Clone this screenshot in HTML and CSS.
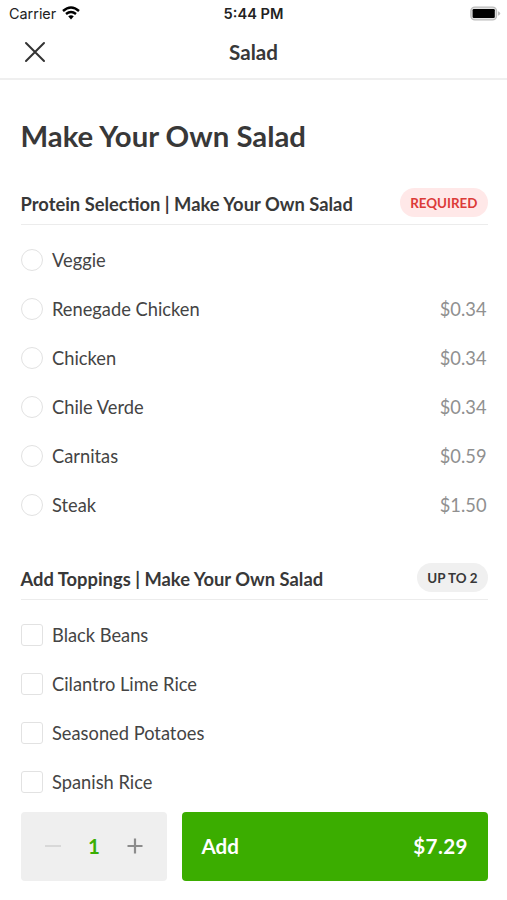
FILE: index.html
```html
<!DOCTYPE html>
<html lang="en">
<head>
<meta charset="utf-8">
<title>Salad</title>
<link rel="stylesheet" href="styles.css">
</head>
<body>
<div class="status">
  <div class="carrier"><span>Carrier</span>
    <svg width="18" height="14" viewBox="0 0 18 14"><path d="M1 5Q9-2 17 5M4 8Q9 3.8 14 8" fill="none" stroke="#000" stroke-width="2.4"/><path d="M6.2 10.3Q9 8.1 11.8 10.3L9 13.4Z"/></svg>
  </div>
  <div class="clock">5:44 PM</div>
  <svg class="battery" width="31" height="15" viewBox="0 0 31 15"><rect x=".9" y="1.1" width="25.6" height="12.8" rx="4" fill="#e4e4e4" stroke="#bcbcbc" stroke-width="1.4"/><rect x="2.6" y="3" width="22.2" height="9" rx="1.2"/><path d="M28 5.2q2.2.7 2.2 2.3T28 9.8z" fill="#bcbcbc"/></svg>
</div>
<header class="nav">
  <svg class="close" width="22" height="22" viewBox="0 0 22 22"><path d="M2 2 20 20M20 2 2 20"/></svg>
  <div class="nav-title">Salad</div>
</header>
<main>
  <h1>Make Your Own Salad</h1>
  <section>
    <div class="group"><h2>Protein Selection | Make Your Own Salad</h2><span class="pill required">REQUIRED</span></div>
    <ul>
      <li><i class="radio"></i><span>Veggie</span></li>
      <li><i class="radio"></i><span>Renegade Chicken</span><b>$0.34</b></li>
      <li><i class="radio"></i><span>Chicken</span><b>$0.34</b></li>
      <li><i class="radio"></i><span>Chile Verde</span><b>$0.34</b></li>
      <li><i class="radio"></i><span>Carnitas</span><b>$0.59</b></li>
      <li><i class="radio"></i><span>Steak</span><b>$1.50</b></li>
    </ul>
  </section>
  <section class="toppings">
    <div class="group"><h2>Add Toppings | Make Your Own Salad</h2><span class="pill limit">UP TO 2</span></div>
    <ul>
      <li><i class="check"></i><span>Black Beans</span></li>
      <li><i class="check"></i><span>Cilantro Lime Rice</span></li>
      <li><i class="check"></i><span>Seasoned Potatoes</span></li>
      <li><i class="check"></i><span>Spanish Rice</span></li>
    </ul>
  </section>
</main>
<footer>
  <div class="stepper">
    <svg width="16" height="16" viewBox="0 0 16 16"><path d="M0 8H16" stroke="#d8d8d8" stroke-width="2"/></svg>
    <span>1</span>
    <svg width="16" height="16" viewBox="0 0 16 16"><path d="M.5 8H15.5M8 .5V15.5" stroke="#8c8c8c" stroke-width="2.2"/></svg>
  </div>
  <div class="add"><span>Add</span><span class="total">$7.29</span></div>
</footer>
</body>
</html>
```
FILE: styles.css
```css
* { box-sizing: border-box; }
body { margin: 0; width: 507px; height: 900px; overflow: hidden; display: flex; flex-direction: column; background: #fff; color: #383838; font-family: Lato, sans-serif; }
.status { height: 27px; flex: none; display: grid; grid-template-columns: 1fr auto 1fr; align-items: center; padding: 1px 6px 0 9px; font: 14.4px/26px Inter, sans-serif; color: #222; }
.carrier { display: flex; align-items: center; gap: 6px; }
.carrier svg { margin-top: -3px; }
.clock { font-weight: 600; font-size: 14.6px; margin-left: -3px; }
.battery { justify-self: end; margin-top: -2px; }
.nav { height: 53px; flex: none; display: grid; grid-template-columns: 1fr auto 1fr; align-items: center; border-bottom: 2px solid #efefef; padding: 0 24px 2px; }
.close { fill: none; stroke: #333; stroke-width: 2; stroke-linecap: round; }
.nav-title { font-size: 20.6px; font-weight: 700; }
main { flex: 1; min-height: 0; overflow: hidden; padding: 0 19.5px 0 20.5px; }
h1 { margin: 36px 0 0; font-size: 29.3px; line-height: 40px; font-weight: 700; }
.group { height: 46px; margin-top: 23px; padding-top: 2px; display: flex; justify-content: space-between; align-items: center; border-bottom: 1px solid #ececec; }
.toppings .group { margin-top: 25.1px; }
h2 { margin: 0; padding-top: 2px; font-size: 18.35px; font-weight: 700; }
.pill { height: 29px; padding: 0 10px; border-radius: 15px; font-size: 13.4px; line-height: 30px; font-weight: 700; }
.required { background: #ffe8e8; color: #dc3b38; }
.limit { background: #f0f0f0; }
ul { list-style: none; margin: 11px 0 0; padding: 0; }
.toppings ul { margin-top: 10.7px; }
li { height: 48.85px; display: flex; align-items: center; font-size: 18.3px; color: #444; }
li b { margin: 0 1px 0 auto; font-weight: 400; color: #909090; }
.radio, .check { width: 22px; height: 22px; margin-right: 9.5px; border: 1.5px solid #e2e2e2; border-radius: 50%; }
.check { border-radius: 3px; }
footer { flex: none; height: 106px; display: flex; gap: 15px; padding: 18px 19.5px 19.5px 20.5px; }
.stepper { width: 146px; border-radius: 4px; background: #efefef; display: flex; align-items: center; justify-content: space-between; padding: 0 23px 0 24px; color: #3aae04; font-size: 20.5px; font-weight: 700; }
.add { flex: 1; border-radius: 4px; background: #3bad00; display: flex; align-items: center; justify-content: space-between; padding: 0 20px; color: #fff; font-size: 20.6px; font-weight: 700; }
.add .total { letter-spacing: .4px; margin-right: -.4px; }
```
